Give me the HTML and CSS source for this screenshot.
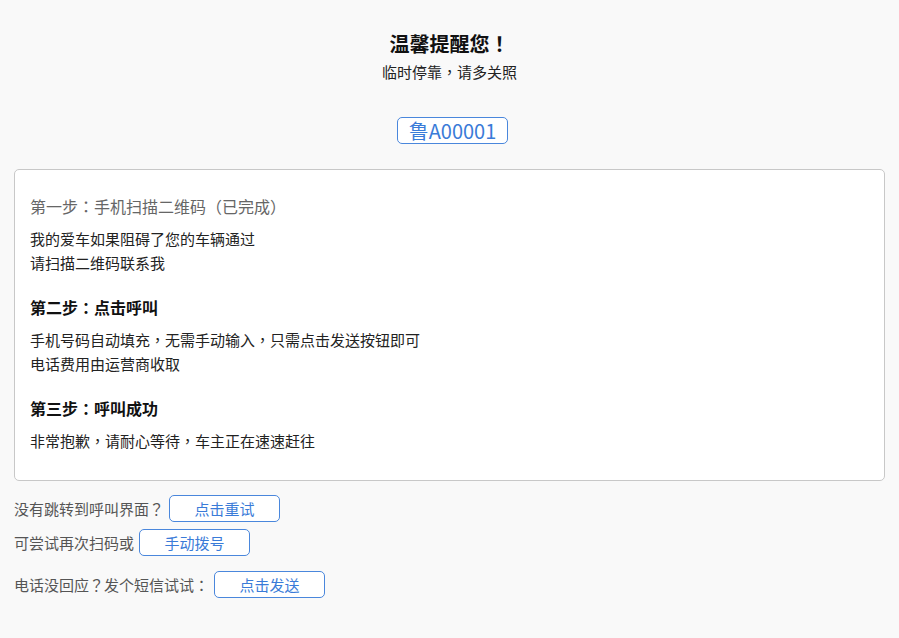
FILE: index.html
```html
<!DOCTYPE html>
<html lang="zh-CN">
<head>
    <meta charset="UTF-8">
    <meta name="viewport" content="width=device-width, initial-scale=1.0">
    <title>挪车提醒</title>
    <link rel="stylesheet" href="styles.css">
</head>
<body>
    <div class="header">
        <h1>温馨提醒您<span class="pu" lang="zh-TW">！</span></h1>
        <p class="sub">临时停靠<span class="pu" lang="zh-TW">，</span>请多关照</p>
        <div class="plate">鲁A00001</div>
    </div>

    <div class="card">
        <div class="step">
            <h3 class="done">第一步<span class="pu" lang="zh-TW">：</span>手机扫描二维码<span class="pu" lang="zh-TW">（</span>已完成<span class="pu" lang="zh-TW">）</span></h3>
            <p>我的爱车如果阻碍了您的车辆通过<br>请扫描二维码联系我</p>
        </div>
        <div class="step">
            <h3>第二步<span class="pu" lang="zh-TW">：</span>点击呼叫</h3>
            <p>手机号码自动填充<span class="pu" lang="zh-TW">，</span>无需手动输入<span class="pu" lang="zh-TW">，</span>只需点击发送按钮即可<br>电话费用由运营商收取</p>
        </div>
        <div class="step">
            <h3>第三步<span class="pu" lang="zh-TW">：</span>呼叫成功</h3>
            <p>非常抱歉<span class="pu" lang="zh-TW">，</span>请耐心等待<span class="pu" lang="zh-TW">，</span>车主正在速速赶往</p>
        </div>
    </div>

    <div class="actions">
        <div class="row">没有跳转到呼叫界面<span class="pu" lang="zh-TW">？</span><button>点击重试</button></div>
        <div class="row">可尝试再次扫码或<button>手动拨号</button></div>
        <div class="row sms">电话没回应<span class="pu" lang="zh-TW">？</span>发个短信试试<span class="pu" lang="zh-TW">：</span><button>点击发送</button></div>
    </div>
</body>
</html>
```

FILE: styles.css
```css
body {
    margin: 0;
    padding: 0 14px;
    background-color: #f9f9f9;
    font-family: "Noto Sans CJK SC", "Liberation Sans", sans-serif;
    color: #222;
}
/* 全角标点居中显示 */
.pu {
    font-family: "Noto Sans CJK TC", "Noto Sans CJK SC", sans-serif;
}
.header {
    text-align: center;
    padding-top: 30px;
}
h1 {
    margin: 0;
    font-size: 20px;
    line-height: 28px;
    color: #111;
}
.sub {
    margin: 3px 0 0;
    font-size: 15px;
    line-height: 22px;
    color: #222;
}
.plate {
    display: inline-block;
    box-sizing: border-box;
    width: 111px;
    height: 27px;
    margin: 34px 0 0 6px;
    border: 1px solid #4a87dc;
    border-radius: 5px;
    background-color: #fff;
    color: #3a7bd8;
    font-size: 20px;
    line-height: 25px;
}
.card {
    margin-top: 25px;
    background-color: #fff;
    border: 1px solid #c8c8c8;
    border-radius: 5px;
    padding: 24px 15px 27px;
}
.step {
    margin-bottom: 20px;
}
.step:last-child {
    margin-bottom: 0;
}
h3 {
    margin: 0 0 9px;
    font-size: 16px;
    line-height: 24px;
    color: #111;
}
h3.done {
    font-weight: normal;
    color: #666;
}
.step p {
    margin: 0;
    font-size: 15px;
    line-height: 24px;
}
.actions {
    padding-top: 14px;
}
.row {
    display: flex;
    align-items: center;
    height: 27px;
    margin-bottom: 7px;
    font-size: 15px;
    color: #555;
}
.row.sms {
    margin-top: 15px;
}
button {
    box-sizing: border-box;
    width: 111px;
    height: 27px;
    margin-left: 5px;
    padding: 0;
    border: 1px solid #4a87dc;
    border-radius: 5px;
    background-color: #fff;
    color: #3a7bd8;
    font-family: inherit;
    font-size: 15px;
    cursor: pointer;
}
```
